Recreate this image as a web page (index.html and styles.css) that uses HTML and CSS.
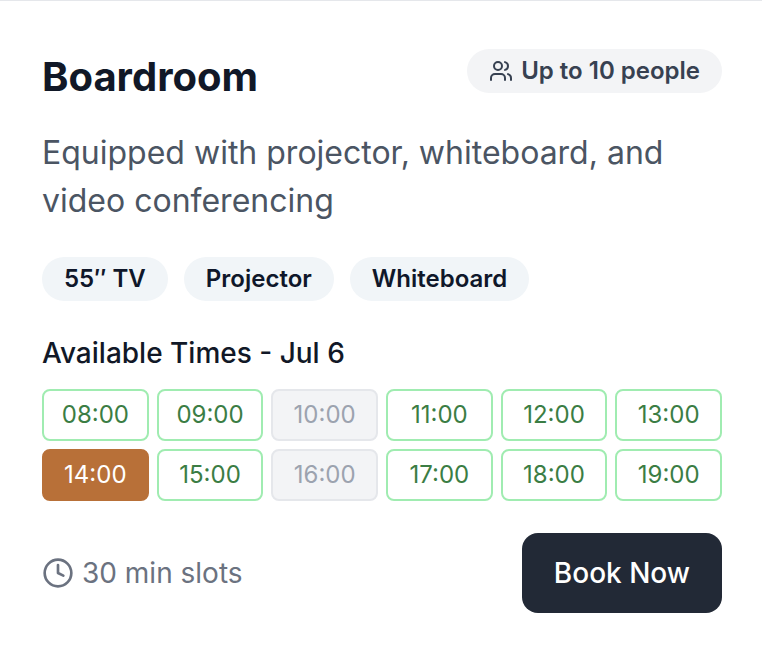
FILE: index.html
```html
<!DOCTYPE html>
<html lang="en">
<head>
<meta charset="utf-8">
<meta name="viewport" content="width=device-width, initial-scale=1">
<title>Boardroom</title>
<link rel="stylesheet" href="styles.css">
</head>
<body>
<main class="room">
  <header class="room-header">
    <h1 class="room-name">Boardroom</h1>
    <span class="capacity">
      <svg class="capacity-icon" viewBox="0 0 24 24" aria-hidden="true"><path d="M16 21v-2a4 4 0 0 0-4-4H6a4 4 0 0 0-4 4v2"/><circle cx="9" cy="7" r="4"/><path d="M22 21v-2a4 4 0 0 0-3-3.87"/><path d="M16 3.13a4 4 0 0 1 0 7.75"/></svg>
      Up to 10 people
    </span>
  </header>
  <p class="description">Equipped with projector, whiteboard, and video conferencing</p>
  <ul class="features">
    <li class="feature">55″ TV</li>
    <li class="feature">Projector</li>
    <li class="feature">Whiteboard</li>
  </ul>
  <section class="times">
    <h2 class="times-title">Available Times - Jul 6</h2>
    <div class="slots">
      <button class="slot" type="button">08:00</button>
      <button class="slot" type="button">09:00</button>
      <button class="slot" type="button" disabled>10:00</button>
      <button class="slot" type="button">11:00</button>
      <button class="slot" type="button">12:00</button>
      <button class="slot" type="button">13:00</button>
      <button class="slot slot-selected" type="button" aria-pressed="true">14:00</button>
      <button class="slot" type="button">15:00</button>
      <button class="slot" type="button" disabled>16:00</button>
      <button class="slot" type="button">17:00</button>
      <button class="slot" type="button">18:00</button>
      <button class="slot" type="button">19:00</button>
    </div>
  </section>
  <footer class="room-footer">
    <span class="duration">
      <svg class="duration-icon" viewBox="0 0 24 24" aria-hidden="true"><circle cx="12" cy="12" r="10"/><path d="M12 6v6l4 2"/></svg>
      30 min slots
    </span>
    <button class="book" type="button">Book Now</button>
  </footer>
</main>
</body>
</html>
```
FILE: styles.css
```css
* {
  box-sizing: border-box;
  margin: 0;
  padding: 0;
}

body {
  background: #fff;
  color: #111827;
  font-family: Inter, sans-serif;
}

button {
  font: inherit;
}

svg {
  flex: none;
  fill: none;
  stroke: currentColor;
  stroke-width: 2;
  stroke-linecap: round;
  stroke-linejoin: round;
}

.room {
  border-top: 1px solid #e5e7eb;
  padding: 48px 40px 32px 42px;
}

.room-header {
  display: flex;
  justify-content: space-between;
  align-items: flex-start;
}

.room-name {
  font-size: 40px;
  line-height: 56px;
  font-weight: 700;
}

.capacity {
  display: flex;
  align-items: center;
  gap: 8px;
  padding: 6px 22px;
  border-radius: 22px;
  background: #f3f4f6;
  color: #374151;
  font-size: 24px;
  line-height: 32px;
  font-weight: 600;
}

.capacity-icon {
  width: 24px;
  height: 24px;
}

.description {
  margin-top: 24px;
  color: #4b5563;
  font-size: 32px;
  line-height: 48px;
}

.features {
  display: flex;
  flex-wrap: wrap;
  gap: 16px;
  margin-top: 32px;
  list-style: none;
}

.feature {
  padding: 6px 22px;
  border-radius: 22px;
  background: #f1f5f8;
  color: #0f172a;
  font-size: 24px;
  line-height: 32px;
  font-weight: 600;
}

.times {
  margin-top: 32px;
}

.times-title {
  font-size: 28px;
  line-height: 40px;
  font-weight: 500;
}

.slots {
  display: grid;
  grid-template-columns: repeat(6, 1fr);
  gap: 8px;
  margin-top: 16px;
}

.slot {
  height: 52px;
  border: 2px solid #a0ecb1;
  border-radius: 8px;
  background: #fff;
  color: #3b7d44;
  font-size: 24px;
  line-height: 32px;
}

.slot:disabled {
  border-color: #e5e7eb;
  background: #f3f4f6;
  color: #9ca3af;
}

.slot-selected {
  border-color: #b87038;
  background: #b87038;
  color: #fff;
}

.room-footer {
  display: flex;
  justify-content: space-between;
  align-items: center;
  margin-top: 32px;
}

.duration {
  display: flex;
  align-items: center;
  gap: 8px;
  color: #6b7280;
  font-size: 28px;
  line-height: 40px;
}

.duration-icon {
  width: 32px;
  height: 32px;
}

.book {
  padding: 20px 32px;
  border: 0;
  border-radius: 16px;
  background: #222936;
  color: #fff;
  font-size: 28px;
  line-height: 40px;
  font-weight: 500;
}
```
